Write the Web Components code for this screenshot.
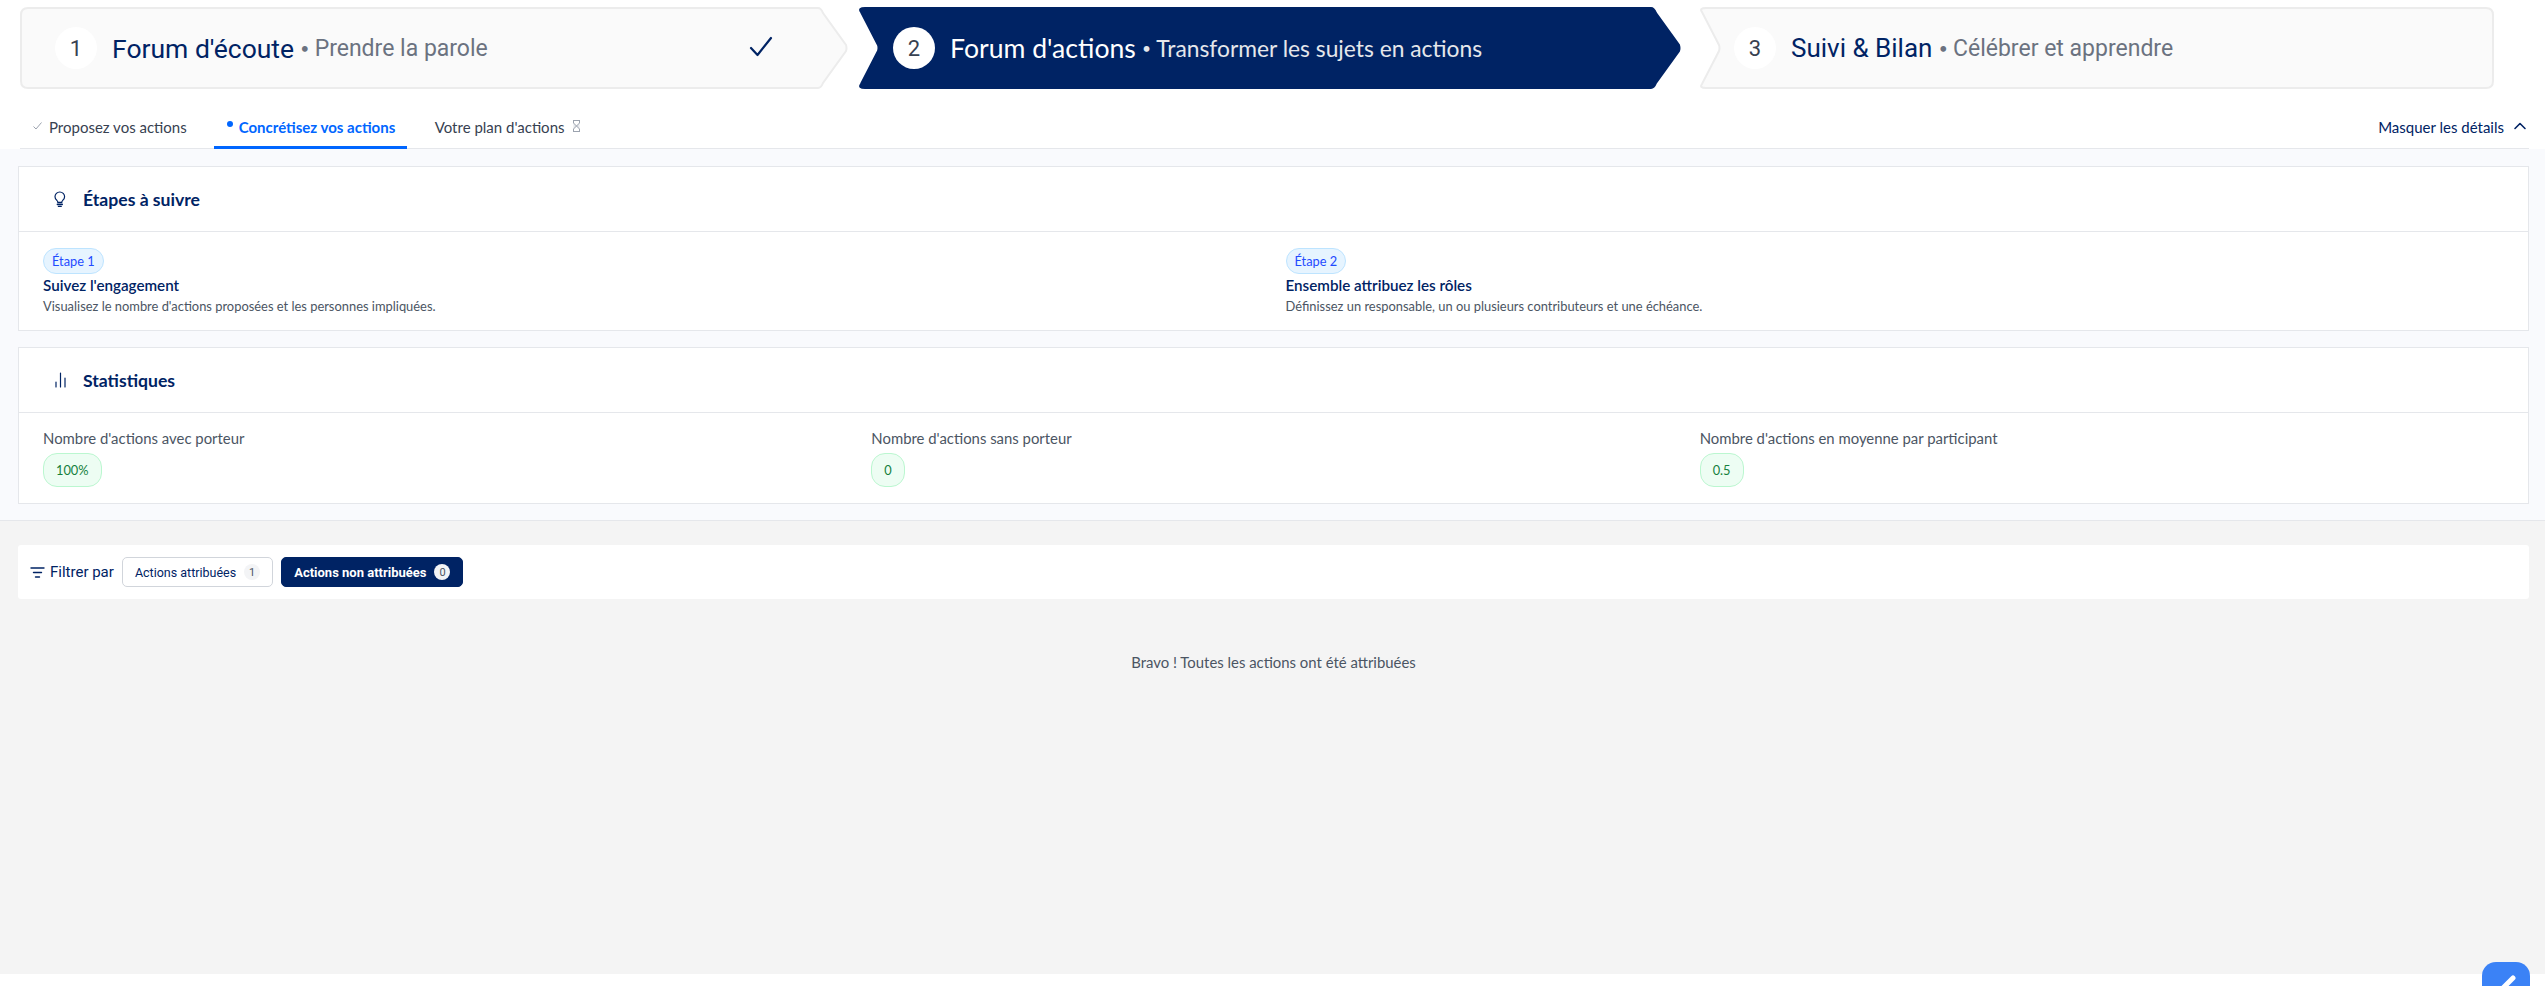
<!DOCTYPE html>
<html lang="fr">
<head>
<meta charset="utf-8">
<title>Forum d'actions</title>
<style>
  html, body { margin: 0; padding: 0; background: #fff; overflow: hidden; }
  body { font-family: Lato, "Liberation Sans", sans-serif; color: #002364; }
</style>
</head>
<body>
<app-shell>
  <step-bar>
    <step-item width="828" num="1" arrow check title-font="Roboto" title-size="26.5">
      Forum d'écoute<span slot="sub">Prendre la parole</span>
    </step-item>
    <step-item width="824" num="2" notch arrow active title-size="26.6">
      Forum d'actions<span slot="sub">Transformer les sujets en actions</span>
    </step-item>
    <step-item width="796" num="3" notch title-font="Roboto" title-size="26">
      Suivi &amp; Bilan<span slot="sub">Célébrer et apprendre</span>
    </step-item>
  </step-bar>

  <sub-tabs></sub-tabs>

  <details-band>
    <info-card icon="bulb" heading="Étapes à suivre" style="--card-height: 165px">
      <div style="display:grid;grid-template-columns:1fr 1fr;column-gap:24px">
        <step-entry label="Étape 1" heading="Suivez l'engagement">Visualisez le nombre d'actions proposées et les personnes impliquées.</step-entry>
        <step-entry label="Étape 2" heading="Ensemble attribuez les rôles">Définissez un responsable, un ou plusieurs contributeurs et une échéance.</step-entry>
      </div>
    </info-card>
    <info-card icon="bars" heading="Statistiques" style="--card-height: 157px">
      <div style="display:grid;grid-template-columns:repeat(3,1fr);column-gap:24px">
        <stat-entry value="100%">Nombre d'actions avec porteur</stat-entry>
        <stat-entry value="0">Nombre d'actions sans porteur</stat-entry>
        <stat-entry value="0.5">Nombre d'actions en moyenne par participant</stat-entry>
      </div>
    </info-card>
  </details-band>

  <actions-area>
    <filter-bar>
      <filter-chip count="1">Actions attribuées</filter-chip>
      <filter-chip count="0" active>Actions non attribuées</filter-chip>
    </filter-bar>
  </actions-area>

  <edit-fab></edit-fab>
</app-shell>

<script>
const NAVY = "#002364";

class AppShell extends HTMLElement {
  constructor() {
    super();
    this.attachShadow({ mode: "open" });
    this.shadowRoot.innerHTML = `
    <style>
      :host { display: block; position: relative; height: 986px; overflow: hidden; background: #fff; }
    </style>
    <slot></slot>`;
  }
}

class StepBar extends HTMLElement {
  constructor() {
    super();
    this.attachShadow({ mode: "open" });
    this.shadowRoot.innerHTML = `
    <style>
      :host { display: flex; padding: 7px 0 0 20px; height: 82px; }
      ::slotted(step-item:nth-child(2)) { margin-left: 9px; }
      ::slotted(step-item:nth-child(3)) { margin-left: 17px; }
    </style>
    <slot></slot>`;
  }
}

class StepItem extends HTMLElement {
  constructor() {
    super();
    this.attachShadow({ mode: "open" });
  }

  // the chevron outline, rounded a little on its corners
  shape(w, h, notch, arrow) {
    const n = 22, a = 27, r = 7, m = 1;
    const right = arrow ? w - a : w - m;
    const mid = h / 2;
    let d = notch
      ? `M${m + 3} ${m + r - 3} Q${m} ${m} ${m + r} ${m}`
      : `M${m} ${m + r} Q${m} ${m} ${m + r} ${m}`;
    if (arrow) {
      d += ` L${right - 3} ${m} Q${right} ${m} ${right + 2} ${m + 5}`;
      d += ` L${w - 2} ${mid - 3} Q${w - m} ${mid} ${w - 2} ${mid + 3}`;
      d += ` L${right + 2} ${h - m - 5} Q${right} ${h - m} ${right - 3} ${h - m}`;
    } else {
      d += ` L${right - r} ${m} Q${right} ${m} ${right} ${m + r}`;
      d += ` L${right} ${h - m - r} Q${right} ${h - m} ${right - r} ${h - m}`;
    }
    if (notch) {
      d += ` L${m + r} ${h - m} Q${m} ${h - m} ${m + 3} ${h - m - r + 3}`;
      d += ` L${n - 1} ${mid + 3} Q${n} ${mid} ${n - 1} ${mid - 3} Z`;
    } else {
      d += ` L${m + r} ${h - m} Q${m} ${h - m} ${m} ${h - m - r} Z`;
    }
    return d;
  }

  connectedCallback() {
    const w = Number(this.getAttribute("width"));
    const active = this.hasAttribute("active");
    const d = this.shape(w, 82, this.hasAttribute("notch"), this.hasAttribute("arrow"));
    const titleFont = this.getAttribute("title-font") || "Lato";
    const titleSize = this.getAttribute("title-size");
    const subSize = active ? 22.8 : 23;
    this.shadowRoot.innerHTML = `
    <style>
      :host {
        display: block; position: relative; box-sizing: border-box;
        width: ${w}px; height: 82px; flex: none;
      }
      svg.bg { position: absolute; inset: 0; }
      .row {
        position: relative; display: flex; align-items: center; height: 100%;
        padding-left: ${this.hasAttribute("notch") ? 36 : 35}px;
      }
      .num {
        width: 42px; height: 42px; border-radius: 50%; background: #fff; flex: none;
        display: flex; align-items: center; justify-content: center;
        font: 400 22px Roboto, sans-serif; color: #374151;
      }
      .title {
        margin-left: 15px; font: 400 ${titleSize}px ${titleFont}, sans-serif; white-space: nowrap;
        color: ${active ? "#fff" : NAVY};
      }
      .sep { margin: 0 6px 0 7px; font: 700 13px Lato, sans-serif; color: ${active ? "#e5e7eb" : "#6b7280"}; }
      .sub { font: 400 ${subSize}px ${titleFont}, sans-serif; white-space: nowrap; color: ${active ? "#e5e7eb" : "#6b7280"}; }
      .check { position: absolute; left: 729px; top: 28px; }
    </style>
    <svg class="bg" width="${w}" height="82" viewBox="0 0 ${w} 82">
      <path d="${d}" fill="${active ? NAVY : "#fafafa"}" stroke="${active ? NAVY : "#ececec"}" stroke-width="2"/>
    </svg>
    <div class="row">
      <div class="num">${this.getAttribute("num")}</div>
      <div class="title"><slot></slot></div>
      <span class="sep">•</span>
      <span class="sub"><slot name="sub"></slot></span>
      ${this.hasAttribute("check") ? `<svg class="check" width="24" height="24" viewBox="0 0 24 24" fill="none" stroke="${NAVY}" stroke-width="2.2" stroke-linecap="round" stroke-linejoin="round"><path d="M2 13 L8.5 20 L22 3"/></svg>` : ""}
    </div>`;
  }
}

class SubTabs extends HTMLElement {
  constructor() {
    super();
    this.attachShadow({ mode: "open" });
    this.shadowRoot.innerHTML = `
    <style>
      :host {
        display: flex; align-items: stretch; box-sizing: border-box; height: 60px;
        margin: 0 16px 0 20px; border-bottom: 1px solid #e5e7eb;
        font: 400 15px Lato, sans-serif; color: #374151; padding-top: 22px;
      }
      .tab { display: flex; align-items: flex-start; gap: 7px; padding: 7px 12px 0 13px; box-sizing: border-box; white-space: nowrap; }
      .tab.first { margin-right: 15px; }
      .tab.on {
        color: #0066ff; font-weight: 700; border-bottom: 3px solid #0066ff;
        margin-bottom: -1px; padding: 7px 10px 0 13px; gap: 6px; width: 193px; margin-right: 15px;
      }
      .dot { width: 6px; height: 6px; border-radius: 50%; background: #0066ff; margin: 3px 0 0 0; flex: none; }
      .more {
        margin-left: auto; display: flex; align-items: flex-start; gap: 9px; padding: 7px 2px 0 0;
        color: ${NAVY};
      }
      svg { flex: none; }
    </style>
    <div class="tab first">
      <svg width="9" height="8" viewBox="0 0 9 8" fill="none" stroke="#9ca3af" stroke-width="1" style="margin-top:4px"><path d="M0.5 4.5 L3 7 L8.5 0.5"/></svg>
      <span>Proposez vos actions</span>
    </div>
    <div class="tab on"><span class="dot"></span><span>Concrétisez vos actions</span></div>
    <div class="tab">
      <span>Votre plan d'actions</span>
      <svg width="9" height="12" viewBox="0 0 9 12" style="margin-top:2px"><path d="M1 .5 H8 M1 11.5 H8 M1.5 .5 V3 L4.5 6 L1.5 9 V11.5 M7.5 .5 V3 L4.5 6 L7.5 9 V11.5" fill="#e5e7eb" stroke="#9ca3af" stroke-width="1"/></svg>
    </div>
    <div class="more">
      <span>Masquer les détails</span>
      <svg width="14" height="14" viewBox="0 0 14 14" fill="none" stroke="${NAVY}" stroke-width="1.6" stroke-linecap="round" stroke-linejoin="round" style="margin-top:1px"><path d="M2 9.5 L7 4.5 L12 9.5"/></svg>
    </div>`;
  }
}

class DetailsBand extends HTMLElement {
  constructor() {
    super();
    this.attachShadow({ mode: "open" });
    this.shadowRoot.innerHTML = `
    <style>
      :host {
        display: flex; flex-direction: column; gap: 16px; box-sizing: border-box;
        height: 372px; padding: 17px 16px 16px 18px;
        background: #f9fafd; border-bottom: 1px solid #e5e7eb;
      }
    </style>
    <slot></slot>`;
  }
}

const CARD_ICONS = {
  bulb: `<path d="M3 9.6 C1.6 8.6 1 7.2 1 5.8 A4.8 4.8 0 0 1 10.6 5.8 C10.6 7.2 10 8.6 8.6 9.6 C8 10.1 7.8 10.6 7.8 11.4 H3.8 C3.8 10.6 3.6 10.1 3 9.6 Z"/><path d="M3.4 13.4 H8.2" stroke-width="1.6"/><path d="M4.4 15.4 H7.2" stroke-width="1.3"/>`,
  bars: `<path d="M2 15 V10 M6.5 15 V1 M11 15 V6"/>`
};

class InfoCard extends HTMLElement {
  constructor() {
    super();
    this.attachShadow({ mode: "open" });
  }

  connectedCallback() {
    this.shadowRoot.innerHTML = `
    <style>
      :host {
        display: block; box-sizing: border-box; height: var(--card-height);
        background: #fff; border: 1px solid #e5e7eb; flex: none;
      }
      header {
        display: flex; align-items: center; box-sizing: border-box; height: 65px;
        padding-left: 35px; border-bottom: 1px solid #e5e7eb;
        font: 700 17.6px Lato, sans-serif; color: ${NAVY};
      }
      h2 { font: inherit; margin: 0 0 0 17px; }
      .body { padding: 16px 24px 0; }
    </style>
    <header>
      <svg width="12" height="17" viewBox="0 0 12 17" fill="none" stroke="${NAVY}" stroke-width="1.2" stroke-linecap="round" stroke-linejoin="round" style="flex:none">${CARD_ICONS[this.getAttribute("icon")]}</svg>
      <h2>${this.getAttribute("heading")}</h2>
    </header>
    <div class="body"><slot></slot></div>`;
  }
}

class StepEntry extends HTMLElement {
  constructor() {
    super();
    this.attachShadow({ mode: "open" });
  }

  connectedCallback() {
    this.shadowRoot.innerHTML = `
    <style>
      :host { display: block; font-family: Lato, sans-serif; }
      .pill {
        display: inline-flex; align-items: center; box-sizing: border-box; height: 26px;
        padding: 0 8px; border-radius: 13px; background: #e6f4ff; border: 1px solid #bde4ff;
        font-size: 12.8px; color: #1f4bff;
      }
      .title { font-size: 15.2px; font-weight: 600; line-height: 20px; color: ${NAVY}; margin-top: 1px; }
      .desc { font-size: 12.9px; line-height: 20px; color: #4b5563; margin-top: 1px; }
      .pillrow { height: 26px; }
    </style>
    <div class="pillrow"><span class="pill">${this.getAttribute("label")}</span></div>
    <div class="title">${this.getAttribute("heading")}</div>
    <div class="desc"><slot></slot></div>`;
  }
}

class StatEntry extends HTMLElement {
  constructor() {
    super();
    this.attachShadow({ mode: "open" });
  }

  connectedCallback() {
    this.shadowRoot.innerHTML = `
    <style>
      :host { display: block; font-family: Lato, sans-serif; }
      .label { font-size: 14.9px; line-height: 19px; color: #4b5563; }
      .pill {
        display: inline-flex; align-items: center; box-sizing: border-box; height: 34px; margin-top: 5px;
        padding: 0 12px; border-radius: 14px; background: #edfdf3; border: 1px solid #bbf7d0;
        font-size: 12.8px; color: #15803d;
      }
    </style>
    <div class="label"><slot></slot></div>
    <span class="pill">${this.getAttribute("value")}</span>`;
  }
}

class ActionsArea extends HTMLElement {
  constructor() {
    super();
    this.attachShadow({ mode: "open" });
    this.shadowRoot.innerHTML = `
    <style>
      :host {
        display: block; box-sizing: border-box; height: 453px;
        padding: 24px 16px 0 18px; background: #f4f4f4;
      }
      .empty {
        text-align: center; margin-top: 53px;
        font: 400 14.9px/20px Lato, sans-serif; color: #4b5563;
      }
    </style>
    <slot></slot>
    <div class="empty">Bravo ! Toutes les actions ont été attribuées</div>`;
  }
}

class FilterBar extends HTMLElement {
  constructor() {
    super();
    this.attachShadow({ mode: "open" });
    this.shadowRoot.innerHTML = `
    <style>
      :host {
        display: flex; align-items: center; box-sizing: border-box; height: 54px;
        padding-left: 12px; border-radius: 3px; background: #fff;
        font: 400 15px Roboto, sans-serif; color: ${NAVY};
      }
      .label { display: flex; align-items: center; gap: 5px; margin-right: 8px; white-space: nowrap; }
      ::slotted(filter-chip) { margin-right: 8px; }
    </style>
    <div class="label">
      <svg width="15" height="13" viewBox="0 0 15 13" fill="none" stroke="${NAVY}" stroke-width="1.4" stroke-linecap="round"><path d="M1 2 H14 M3.5 6.5 H11.5 M5.5 11 H9.5"/></svg>
      <span>Filtrer par</span>
    </div>
    <slot></slot>`;
  }
}

class FilterChip extends HTMLElement {
  constructor() {
    super();
    this.attachShadow({ mode: "open" });
  }

  connectedCallback() {
    const active = this.hasAttribute("active");
    this.shadowRoot.innerHTML = `
    <style>
      :host {
        display: inline-flex; align-items: center; gap: 8px; box-sizing: border-box; height: 30px;
        padding: 0 12px; border-radius: 5px; font: ${active ? 700 : 400} ${active ? 13 : 12.5}px Roboto, sans-serif;
        white-space: nowrap;
        background: ${active ? NAVY : "#fff"}; color: ${active ? "#fff" : NAVY};
        border: 1px solid ${active ? NAVY : "#d1d5db"};
      }
      .count {
        width: 16px; height: 16px; border-radius: 50%; display: flex; align-items: center; justify-content: center;
        font-size: 11px; font-weight: 400; background: #f3f4f6; color: #4b5563;
      }
    </style>
    <slot></slot><span class="count">${this.getAttribute("count")}</span>`;
  }
}

class EditFab extends HTMLElement {
  constructor() {
    super();
    this.attachShadow({ mode: "open" });
    this.shadowRoot.innerHTML = `
    <style>
      :host {
        position: absolute; left: 2482px; top: 962px; width: 48px; height: 48px;
        border-radius: 14px; background: #3b82f6; display: block;
      }
      svg { position: absolute; left: 0; top: 0; }
    </style>
    <svg width="48" height="48" viewBox="0 0 48 48" fill="none" stroke="#fff" stroke-width="5" stroke-linecap="round"><path d="M31 16 L17 30"/></svg>`;
  }
}

customElements.define("app-shell", AppShell);
customElements.define("step-bar", StepBar);
customElements.define("step-item", StepItem);
customElements.define("sub-tabs", SubTabs);
customElements.define("details-band", DetailsBand);
customElements.define("info-card", InfoCard);
customElements.define("step-entry", StepEntry);
customElements.define("stat-entry", StatEntry);
customElements.define("actions-area", ActionsArea);
customElements.define("filter-bar", FilterBar);
customElements.define("filter-chip", FilterChip);
customElements.define("edit-fab", EditFab);
</script>
</body>
</html>
